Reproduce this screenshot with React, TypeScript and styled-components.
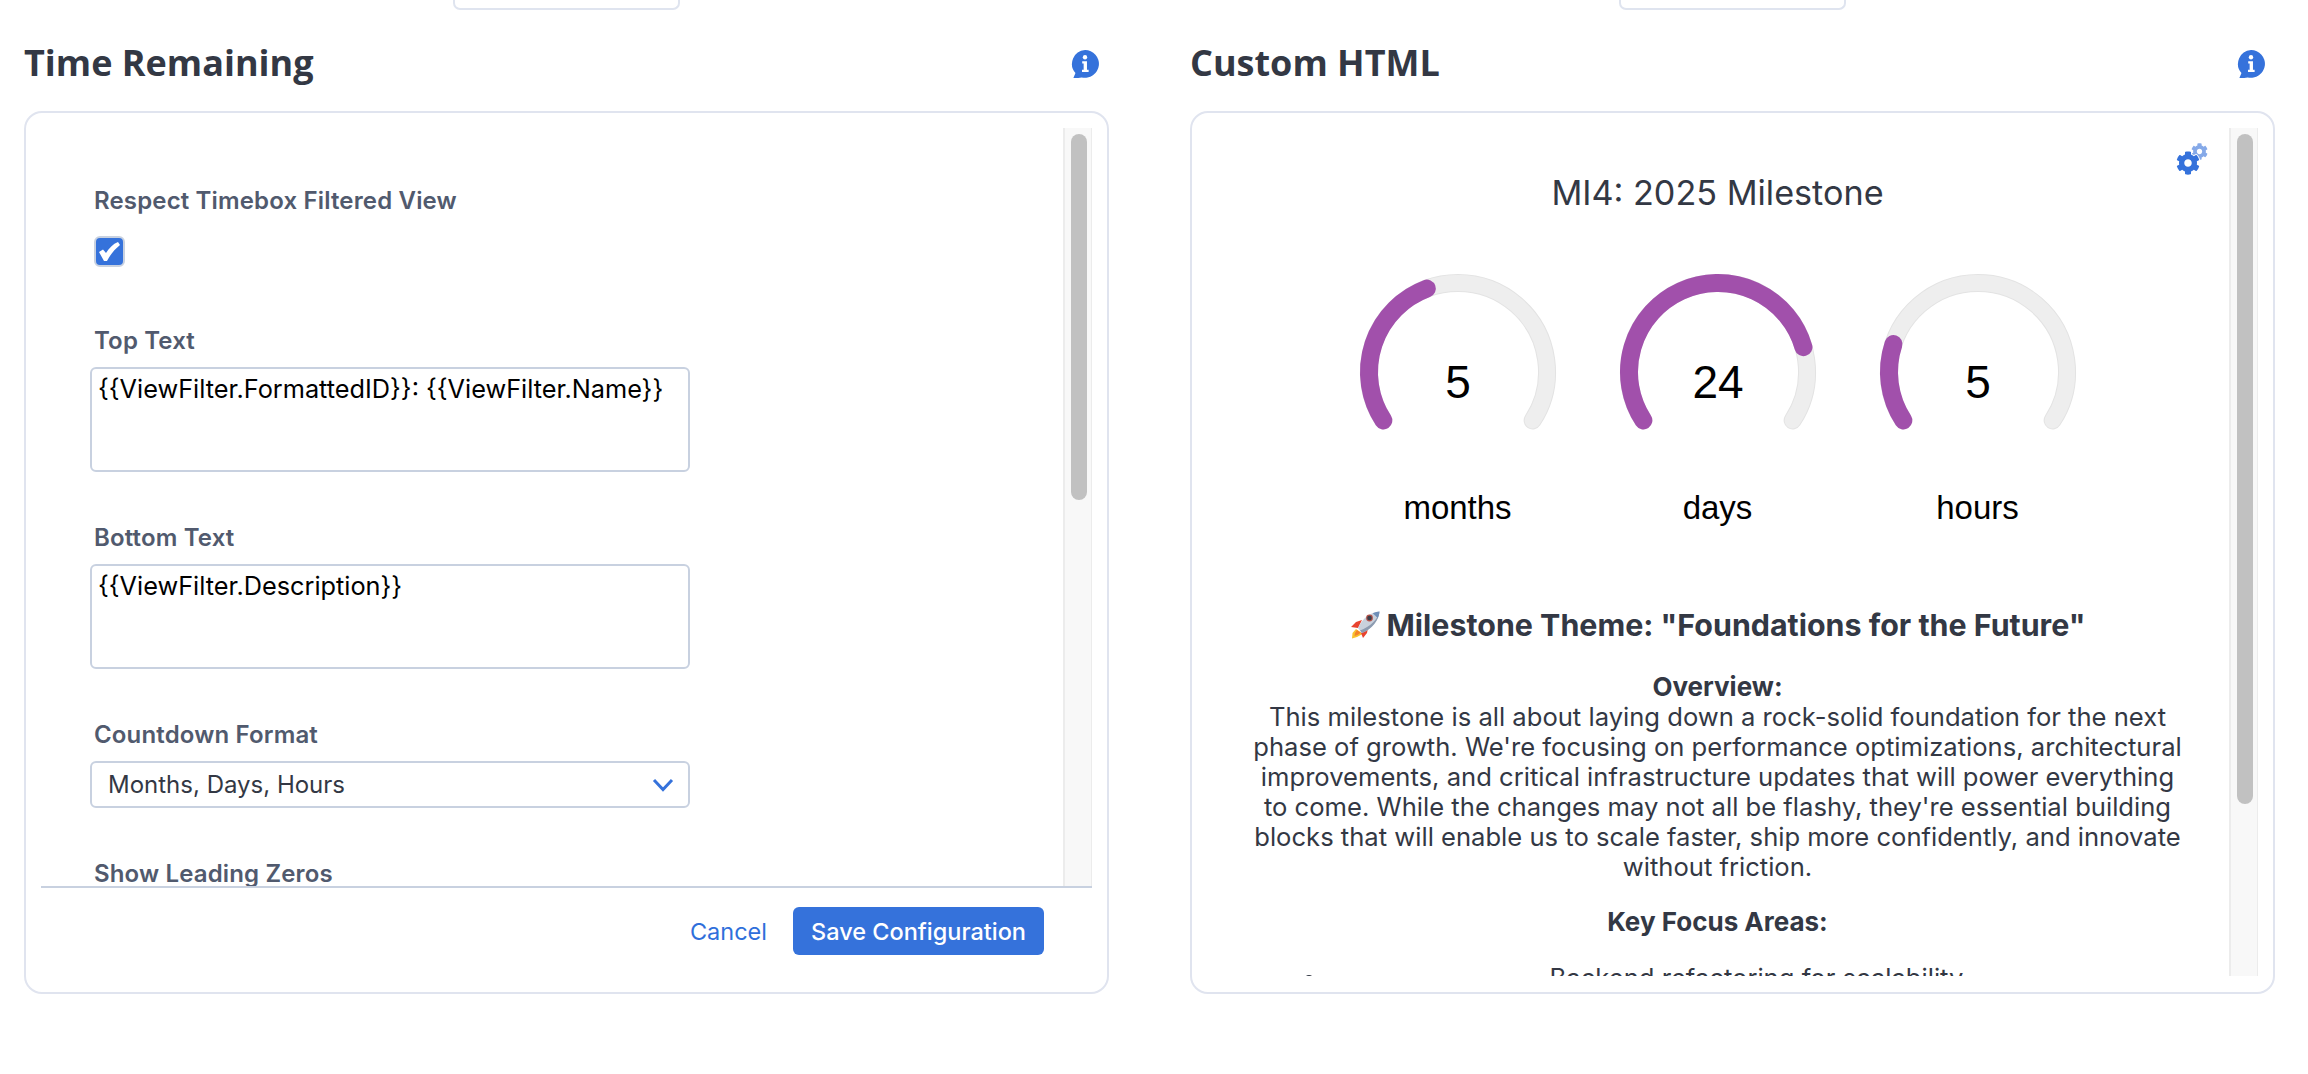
import React from 'react'
import styled, { createGlobalStyle } from 'styled-components'
import { FaCog } from 'react-icons/fa'

const GlobalStyle = createGlobalStyle`
  html, body {
    margin: 0;
    height: 100%;
    overflow: hidden;
    background: #fff;
  }
  * {
    box-sizing: border-box;
  }
`

const Page = styled.div`
  display: grid;
  grid-template-columns: 1085px 1085px;
  column-gap: 81px;
  padding-left: 24px;
  font-family: Inter, 'Liberation Sans', sans-serif;
  color: #333844;
`

const Column = styled.section`
  display: flex;
  flex-direction: column;
`

const TopStub = styled.div`
  align-self: center;
  width: 227px;
  height: 10px;
  border: 2px solid #dfe4ef;
  border-top: 0;
  border-radius: 0 0 7px 7px;
`

const Header = styled.header`
  display: flex;
  align-items: center;
  justify-content: space-between;
  height: 50px;
  margin: 27px 0 24px;
  padding-right: 10px;
`

const Title = styled.h2`
  margin: 0;
  font-family: 'Open Sans', sans-serif;
  font-size: 36px;
  font-weight: 700;
  color: #333844;
`

const InfoBadge = styled.svg`
  width: 28px;
  height: 28px;
  margin-top: 4px;
  color: #3572db;
`

const Card = styled.div`
  display: flex;
  flex-direction: column;
  height: 883px;
  padding: 15px 15px 0;
  background: #fff;
  border: 2px solid #e0e4ef;
  border-radius: 18px;
`

const ScrollArea = styled.div<{ $clipBottom?: boolean }>`
  position: relative;
  display: flex;
  flex: ${({ $clipBottom }) => ($clipBottom ? '0 0 848px' : '0 0 758px')};
  min-height: 0;
`

const ScrollContent = styled.div`
  flex: 1;
  min-width: 0;
  overflow: hidden;
`

const ScrollTrack = styled.div`
  flex: none;
  width: 29px;
  padding: 6px 4px 0 6px;
  background: #f8f8f8;
  border-left: 2px solid #ececec;
  border-right: 1px solid #ececec;
`

const ScrollThumb = styled.div`
  width: 100%;
  background: #c1c1c1;
  border-radius: 8px;
`

const FormBody = styled(ScrollContent)`
  padding: 58px 0 0 53px;
`

const Field = styled.div<{ $gap?: number }>`
  margin-bottom: ${({ $gap }) => $gap ?? 51}px;
`

const FieldLabel = styled.label`
  display: block;
  height: 30px;
  margin-bottom: 11px;
  font-size: 24px;
  font-weight: 600;
  line-height: 30px;
  letter-spacing: 0.15px;
  color: #515a6e;
`

const CheckRow = styled.div`
  margin-top: 20px;
`

const CheckBox = styled.span`
  display: flex;
  width: 31px;
  height: 31px;
  background: #3572db;
  border: 2px solid #c8d1e0;
  border-radius: 6px;
`

const TextBox = styled.textarea`
  display: block;
  width: 600px;
  height: 105px;
  margin-left: -4px;
  padding: 5px 6px;
  font-family: Inter, sans-serif;
  font-size: 25.3px;
  line-height: 30px;
  color: #000;
  background: #fff;
  border: 2px solid #c8d1e0;
  border-radius: 6px;
  outline: none;
  resize: none;
`

const SelectBox = styled.div`
  display: flex;
  align-items: center;
  justify-content: space-between;
  width: 600px;
  height: 47px;
  margin-left: -4px;
  padding: 0 14px 0 16px;
  font-size: 24px;
  color: #333844;
  border: 2px solid #c8d1e0;
  border-radius: 6px;
`

const Chevron = styled.svg`
  width: 22px;
  height: 14px;
  color: #3572db;
`

const Footer = styled.footer`
  display: flex;
  align-items: flex-start;
  justify-content: flex-end;
  gap: 26px;
  padding: 19px 48px 0 0;
  border-top: 2px solid #c8d1e0;
`

const CancelLink = styled.button`
  height: 48px;
  padding: 0;
  font-family: Inter, sans-serif;
  font-size: 23.5px;
  color: #2f6fdb;
  background: none;
  border: 0;
`

const SaveButton = styled.button`
  width: 251px;
  height: 48px;
  padding: 0;
  font-family: Inter, sans-serif;
  font-size: 23.5px;
  font-weight: 500;
  color: #fff;
  background: #3572db;
  border: 0;
  border-radius: 6px;
`

const GearMark = styled.span`
  position: absolute;
  top: 15px;
  right: 50px;
  width: 32px;
  height: 32px;
`

const SmallGear = styled(FaCog)`
  position: absolute;
  top: 0;
  right: 0;
  width: 17px;
  height: 17px;
  color: #85a9e8;
`

const BigGear = styled(FaCog)`
  position: absolute;
  left: 0;
  bottom: 0;
  width: 24px;
  height: 24px;
  color: #3572db;
  stroke: #fff;
  stroke-width: 40px;
  paint-order: stroke;
  overflow: visible;
`

const MilestoneBody = styled(ScrollContent)`
  padding: 43px 44px 0 43px;
  text-align: center;
`

const MilestoneTitle = styled.h1`
  margin: 0 0 55px;
  font-size: 34.2px;
  font-weight: 400;
  line-height: 44px;
  color: #333844;
`

const GaugeRow = styled.div`
  display: flex;
  justify-content: center;
`

const GaugeCell = styled.div`
  width: 260px;
`

const GaugeSvg = styled.svg`
  display: block;
  width: 260px;
  height: 170px;
`

const GaugeNumber = styled.text`
  font-family: 'Liberation Sans', Arial, sans-serif;
  font-size: 46px;
  fill: #000;
  text-anchor: middle;
`

const GaugeLabel = styled.div`
  margin-top: 48px;
  font-family: 'Liberation Sans', Arial, sans-serif;
  font-size: 33px;
  line-height: 40px;
  color: #000;
`

const ThemeHeading = styled.h3`
  display: flex;
  align-items: center;
  justify-content: center;
  gap: 7px;
  margin: 77px 0 27px;
  font-size: 30.4px;
  font-weight: 700;
  line-height: 40px;
  color: #333844;
`

const SectionTitle = styled.div`
  font-size: 26px;
  font-weight: 700;
  line-height: 30px;
`

const Paragraph = styled.p`
  margin: 0 0 25px;
  font-size: 25.6px;
  line-height: 30px;
`

const FocusList = styled.ul`
  margin: 26px 0 0;
  padding: 0 0 0 78px;
  font-size: 25.6px;
  line-height: 30px;
`

const GAUGE_R = 89
const GAUGE_SWEEP = 123
const polar = (deg: number) => {
  const rad = (deg * Math.PI) / 180
  return [130 + GAUGE_R * Math.sin(rad), 102 - GAUGE_R * Math.cos(rad)]
}

const arc = (from: number, to: number) => {
  const [x1, y1] = polar(from)
  const [x2, y2] = polar(to)
  const large = to - from > 180 ? 1 : 0
  return `M${x1} ${y1}A${GAUGE_R} ${GAUGE_R} 0 ${large} 1 ${x2} ${y2}`
}

const Gauge = ({ value, max, label }: { value: number; max: number; label: string }) => {
  const end = -GAUGE_SWEEP + (value / max) * GAUGE_SWEEP * 2
  return (
    <GaugeCell>
      <GaugeSvg viewBox='0 0 260 170'>
        <path d={arc(-GAUGE_SWEEP, GAUGE_SWEEP)} fill='none' stroke='#e3e3e3' strokeWidth='18' strokeLinecap='round' />
        <path d={arc(-GAUGE_SWEEP, GAUGE_SWEEP)} fill='none' stroke='#eeeeee' strokeWidth='16' strokeLinecap='round' />
        <path d={arc(-GAUGE_SWEEP, end)} fill='none' stroke='#a150ab' strokeWidth='18' strokeLinecap='round' />
        <GaugeNumber x='130' y='128'>{value}</GaugeNumber>
      </GaugeSvg>
      <GaugeLabel>{label}</GaugeLabel>
    </GaugeCell>
  )
}

const InfoIcon = () => (
  <InfoBadge viewBox='0 0 27 27'>
    <path fill='currentColor' d='M13.5 0a13.4 13.4 0 1 1-3.2 26.4q-2.7.6-8 .6l2-4.8A13.4 13.4 0 0 1 13.5 0z' />
    <circle cx='13.5' cy='7' r='2.1' fill='#fff' />
    <path fill='#fff' d='M10.8 10.8h4.6v8.2h1.6v2.2h-6.4V19h1.6v-6h-1.4z' />
  </InfoBadge>
)

const CheckMark = () => (
  <svg width='27' height='27' viewBox='0 0 27 27'>
    <path fill='#fff' d='M3 14l4-2.500 3 3.500c3-5 7-9 12-11l2 3c-6 5-10 10-13 16H8z' />
  </svg>
)

const Rocket = () => (
  <svg width='30' height='28' viewBox='0 0 30 28'>
    <path d='M6 18l-3.5 4-.5 5.5 5-1.5 5.5-3z' fill='#f9c22e' />
    <path d='M7 19l-2 3-.5 3 3-1 3.5-2.500z' fill='#f4832a' />
    <path d='M1 16l5-5 6-2-4 8zM11 22l7-5-1 5-4 5z' fill='#e8432f' />
    <path d='M29.5.5C22 1 13 6 8 17l4 5C22 18 29 9 29.5.5z' fill='#c9d1dc' />
    <path d='M29.5.5C28 8 20 16 10 19.5l2 2.500C22 18 29 9 29.5.5z' fill='#8c9bb0' />
    <path d='M29.5.5c-2.200.2-4.500.8-6.800 1.800l5 4.700c1-2.100 1.600-4.400 1.800-6.500z' fill='#6f8fb8' />
    <circle cx='19.5' cy='7' r='3.4' fill='#b5524a' />
    <circle cx='19.5' cy='7' r='2.3' fill='#3c3f4a' />
  </svg>
)

const App = () => (
  <>
    <GlobalStyle />
    <Page>
      <Column>
        <TopStub />
        <Header>
          <Title>Time Remaining</Title>
          <InfoIcon />
        </Header>
        <Card>
          <ScrollArea>
            <FormBody>
              <Field $gap={59}>
                <FieldLabel>Respect Timebox Filtered View</FieldLabel>
                <CheckRow>
                  <CheckBox>
                    <CheckMark />
                  </CheckBox>
                </CheckRow>
              </Field>
              <Field>
                <FieldLabel>Top Text</FieldLabel>
                <TextBox readOnly defaultValue='{{ViewFilter.FormattedID}}: {{ViewFilter.Name}}' />
              </Field>
              <Field>
                <FieldLabel>Bottom Text</FieldLabel>
                <TextBox readOnly defaultValue='{{ViewFilter.Description}}' />
              </Field>
              <Field>
                <FieldLabel>Countdown Format</FieldLabel>
                <SelectBox>
                  Months, Days, Hours
                  <Chevron viewBox='0 0 22 14'>
                    <path d='M2 2l9 9.5L20 2' fill='none' stroke='currentColor' strokeWidth='3' />
                  </Chevron>
                </SelectBox>
              </Field>
              <Field>
                <FieldLabel>Show Leading Zeros</FieldLabel>
              </Field>
            </FormBody>
            <ScrollTrack>
              <ScrollThumb style={{ height: 366 }} />
            </ScrollTrack>
          </ScrollArea>
          <Footer>
            <CancelLink>Cancel</CancelLink>
            <SaveButton>Save Configuration</SaveButton>
          </Footer>
        </Card>
      </Column>
      <Column>
        <TopStub />
        <Header>
          <Title>Custom HTML</Title>
          <InfoIcon />
        </Header>
        <Card>
          <ScrollArea $clipBottom>
            <MilestoneBody>
              <MilestoneTitle>MI4: 2025 Milestone</MilestoneTitle>
              <GaugeRow>
                <Gauge value={5} max={12} label='months' />
                <Gauge value={24} max={30} label='days' />
                <Gauge value={5} max={24} label='hours' />
              </GaugeRow>
              <ThemeHeading>
                <Rocket />
                Milestone Theme: "Foundations for the Future"
              </ThemeHeading>
              <SectionTitle>Overview:</SectionTitle>
              <Paragraph>
                This milestone is all about laying down a rock-solid foundation for the next phase of growth. We're
                focusing on performance optimizations, architectural improvements, and critical infrastructure updates
                that will power everything to come. While the changes may not all be flashy, they're essential building
                blocks that will enable us to scale faster, ship more confidently, and innovate without friction.
              </Paragraph>
              <SectionTitle>Key Focus Areas:</SectionTitle>
              <FocusList>
                <li>Backend refactoring for scalability</li>
              </FocusList>
            </MilestoneBody>
            <GearMark>
              <SmallGear />
              <BigGear />
            </GearMark>
            <ScrollTrack>
              <ScrollThumb style={{ height: 670 }} />
            </ScrollTrack>
          </ScrollArea>
        </Card>
      </Column>
    </Page>
  </>
)

export default App
